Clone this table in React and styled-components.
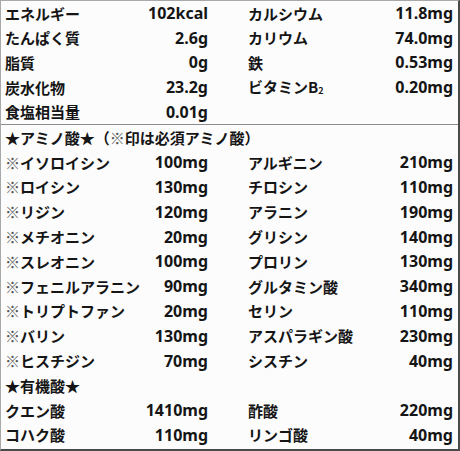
import React from 'react';
import styled, { createGlobalStyle } from 'styled-components';

const GlobalStyle = createGlobalStyle`
  body {
    margin: 0;
    background: #ffffff;
  }
`;

const Table = styled.div`
  width: 460px;
  height: 451px;
  box-sizing: border-box;
  background: #fcfcfc;
  border-top: 1px solid #a8a8a8;
  border-left: 1px solid #a8a8a8;
  border-right: 2px solid #4a4a4a;
  border-bottom: 2px solid #4a4a4a;
  font-family: "Noto Sans CJK JP", "Noto Sans", sans-serif;
  font-weight: 700;
  font-size: 15px;
  color: #151515;
`;

const Section = styled.div`
  display: flex;
  flex-direction: column;
  border-top: ${(p) => (p.divided ? '1px solid #8c8c8c' : 'none')};
`;

const Row = styled.div`
  display: grid;
  grid-template-columns: 203px 205px;
  column-gap: 40px;
  height: ${(p) => p.h}px;
  align-items: center;
  padding: 0 5px 0 4px;
  line-height: 1;
  white-space: nowrap;
`;

const Pair = styled.div`
  display: flex;
  justify-content: space-between;
  align-items: center;
`;

const Value = styled.span`
  font-family: "Noto Sans", "Noto Sans CJK JP", sans-serif;
  font-size: 16px;
`;

const Heading = styled.div`
  height: ${(p) => p.h}px;
  display: flex;
  align-items: center;
  padding-left: 4px;
  white-space: nowrap;
`;

const Mark = styled.span`
  font-weight: 400;
  color: #555;
`;

const Sub = styled.span`
  font-size: 9px;
  vertical-align: -1px;
`;

const ess = (name) => (
  <>
    <Mark>※</Mark>
    {name}
  </>
);

const basics = [
  ['エネルギー', '102kcal', 'カルシウム', '11.8mg'],
  ['たんぱく質', '2.6g', 'カリウム', '74.0mg'],
  ['脂質', '0g', '鉄', '0.53mg'],
  ['炭水化物', '23.2g', <>ビタミンB<Sub>2</Sub></>, '0.20mg'],
  ['食塩相当量', '0.01g', '', ''],
];

const amino = [
  [ess('イソロイシン'), '100mg', 'アルギニン', '210mg'],
  [ess('ロイシン'), '130mg', 'チロシン', '110mg'],
  [ess('リジン'), '120mg', 'アラニン', '190mg'],
  [ess('メチオニン'), '20mg', 'グリシン', '140mg'],
  [ess('スレオニン'), '100mg', 'プロリン', '130mg'],
  [ess('フェニルアラニン'), '90mg', 'グルタミン酸', '340mg'],
  [ess('トリプトファン'), '20mg', 'セリン', '110mg'],
  [ess('バリン'), '130mg', 'アスパラギン酸', '230mg'],
  [ess('ヒスチジン'), '70mg', 'シスチン', '40mg'],
];

const acids = [
  ['クエン酸', '1410mg', '酢酸', '220mg'],
  ['コハク酸', '110mg', 'リンゴ酸', '40mg'],
];

const Line = ({ cells, h }) => (
  <Row h={h}>
    <Pair>
      <span>{cells[0]}</span>
      <Value>{cells[1]}</Value>
    </Pair>
    <Pair>
      <span>{cells[2]}</span>
      <Value>{cells[3]}</Value>
    </Pair>
  </Row>
);

export default function App() {
  return (
    <>
      <GlobalStyle />
      <Table>
        <Section>
          {basics.map((r, i) => (
            <Line key={i} cells={r} h={24.6} />
          ))}
        </Section>
        <Section divided>
          <Heading h={24.8}>★アミノ酸★（<Mark>※</Mark>印は必須アミノ酸）</Heading>
          {amino.map((r, i) => (
            <Line key={i} cells={r} h={24.8} />
          ))}
          <Heading h={24.8}>★有機酸★</Heading>
          {acids.map((r, i) => (
            <Line key={i} cells={r} h={24.8} />
          ))}
        </Section>
      </Table>
    </>
  );
}
